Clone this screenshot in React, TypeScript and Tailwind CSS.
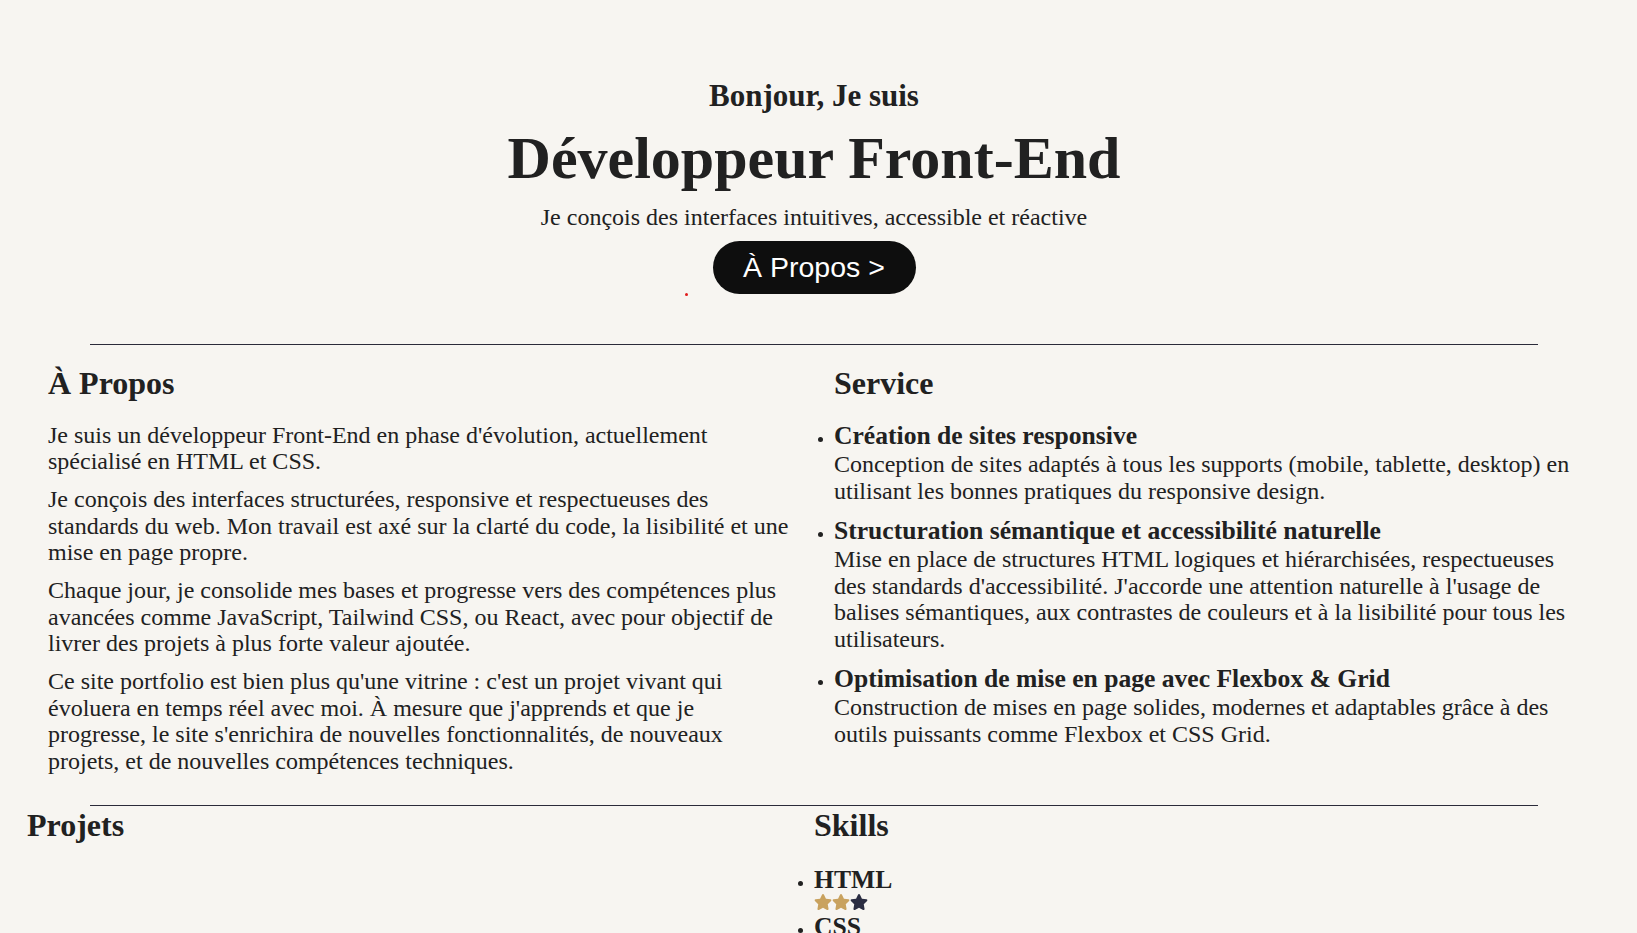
import type { FC } from 'react';

const StarIcon: FC<{ filled: boolean }> = ({ filled }) => (
	<svg viewBox="0 0 576 512" className="h-[16px] w-[18px]" aria-hidden="true">
		<path
			fill={filled ? '#c9a25e' : '#2b2d42'}
			d="M259.3 17.8L194 150.2 47.9 171.5c-26.2 3.8-36.7 36.1-17.7 54.6l105.7 103-25 145.5c-4.5 26.3 23.2 46 46.4 33.7L288 439.6l130.7 68.7c23.2 12.2 50.9-7.4 46.4-33.7l-25-145.5 105.7-103c19-18.5 8.5-50.8-17.7-54.6L382 150.2 316.7 17.8c-11.7-23.6-45.6-23.9-57.4 0z"
		/>
	</svg>
);

const services = [
	{
		title: 'Création de sites responsive',
		text: 'Conception de sites adaptés à tous les supports (mobile, tablette, desktop) en utilisant les bonnes pratiques du responsive design.',
	},
	{
		title: 'Structuration sémantique et accessibilité naturelle',
		text: "Mise en place de structures HTML logiques et hiérarchisées, respectueuses des standards d'accessibilité. J'accorde une attention naturelle à l'usage de balises sémantiques, aux contrastes de couleurs et à la lisibilité pour tous les utilisateurs.",
	},
	{
		title: 'Optimisation de mise en page avec Flexbox & Grid',
		text: 'Construction de mises en page solides, modernes et adaptables grâce à des outils puissants comme Flexbox et CSS Grid.',
	},
];

const skills = [
	{ name: 'HTML', level: 2 },
	{ name: 'CSS', level: 2 },
	{ name: 'JavaScript', level: 1 },
];

const App: FC = () => {
	return (
		<div className="h-[933px] overflow-hidden bg-[#f7f5f1] font-['Liberation_Serif',serif] text-[#212121]">
			<div className="w-[1628px]">
				{/* Hero */}
				<header className="relative flex flex-col items-center pt-[79px]">
					<h2 className="text-[31px] font-bold leading-[1.107]">Bonjour, Je suis</h2>
					<h1 className="mt-[12px] text-[60px] font-bold leading-[1.107]">Développeur Front-End</h1>
					<p className="mt-[12.5px] text-[24px] leading-[1.107]">
						Je conçois des interfaces intuitives, accessible et réactive
					</p>
					<a
						href="#a-propos"
						className="mt-[10px] flex h-[53px] w-[203px] items-center justify-center rounded-full bg-[#0e0e0e] font-['Liberation_Sans',Arial,sans-serif] text-[28.5px] leading-none text-white"
					>
						À Propos &gt;
					</a>
					<span className="absolute left-[685px] top-[293px] h-[3px] w-[3px] rounded-full bg-[#e01b1b]" />
				</header>

				<hr className="mx-[90px] mt-[50px] border-0 border-t border-[#2b2b3a]" />

				{/* A propos + Service */}
				<div className="flex pb-[31px] pt-[21.5px]">
					<section id="a-propos" className="ml-[48px] w-[750px]">
						<h2 className="mb-[20px] text-[32px] font-bold leading-[1.107]">À Propos</h2>
						<div className="flex flex-col gap-[11.3px] text-[24px] leading-[1.107]">
							<p>
								Je suis un développeur Front-End en phase d'évolution, actuellement spécialisé en HTML et CSS.
							</p>
							<p>
								Je conçois des interfaces structurées, responsive et respectueuses des standards du web. Mon
								travail est axé sur la clarté du code, la lisibilité et une mise en page propre.
							</p>
							<p>
								Chaque jour, je consolide mes bases et progresse vers des compétences plus avancées comme
								JavaScript, Tailwind CSS, ou React, avec pour objectif de livrer des projets à plus forte valeur
								ajoutée.
							</p>
							<p>
								Ce site portfolio est bien plus qu'une vitrine : c'est un projet vivant qui évoluera en temps réel
								avec moi. À mesure que j'apprends et que je progresse, le site s'enrichira de nouvelles
								fonctionnalités, de nouveaux projets, et de nouvelles compétences techniques.
							</p>
						</div>
					</section>

					<section className="ml-[36px] w-[750px]">
						<h2 className="mb-[20px] text-[32px] font-bold leading-[1.107]">Service</h2>
						<ul className="flex list-disc flex-col gap-[12.3px]">
							{services.map((service) => (
								<li key={service.title} className="text-[16px]">
									<h3 className="text-[25.6px] font-bold leading-[1.107]">{service.title}</h3>
									<p className="mt-[1.2px] text-[24px] leading-[1.107]">{service.text}</p>
								</li>
							))}
						</ul>
					</section>
				</div>

				<hr className="mx-[90px] border-0 border-t border-[#2b2b3a]" />

				{/* Projets + Skills */}
				<div className="flex pt-[2px]">
					<section className="w-[814px] pl-[27px]">
						<h2 className="text-[32px] font-bold leading-[1.107]">Projets</h2>
					</section>
					<section>
						<h2 className="text-[32px] font-bold leading-[1.107]">Skills</h2>
						<ul className="mt-[21.8px] list-disc">
							{skills.map((skill) => (
								<li key={skill.name} className="text-[16px]">
									<h3 className="text-[25.6px] font-bold leading-[1.107]">{skill.name}</h3>
									<div className="flex h-[19.4px] items-start">
										{[0, 1, 2].map((i) => (
											<StarIcon key={i} filled={i < skill.level} />
										))}
									</div>
								</li>
							))}
						</ul>
					</section>
				</div>
			</div>
		</div>
	);
};

export default App;
